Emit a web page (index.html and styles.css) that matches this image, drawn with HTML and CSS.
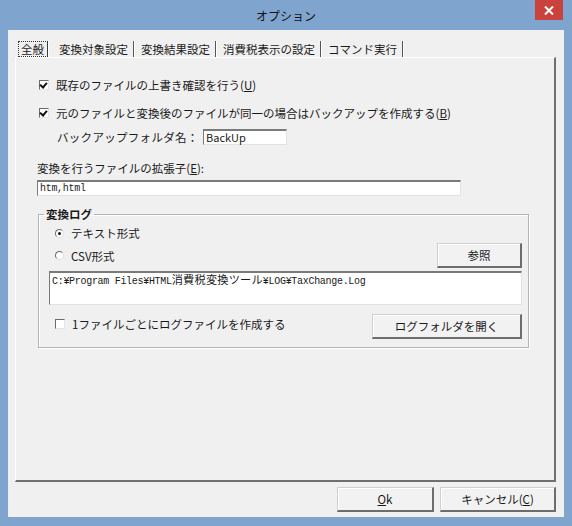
FILE: index.html
```html
<!DOCTYPE html>
<html lang="ja">
<head>
  <meta charset="UTF-8" />
  <title>オプション</title>
  <link rel="stylesheet" href="styles.css">
</head>
<body>
  <div class="window">
    <div class="titlebar">
      <span></span>
      <span class="title">オプション</span>
      <span class="close">
        <svg width="10" height="9" viewBox="0 0 10 9"><path d="M1 0.5 L9 8.5 M9 0.5 L1 8.5" stroke="#fff" stroke-width="2"/></svg>
      </span>
    </div>

    <div class="client">
      <div class="tabs">
        <span class="tab active">全般</span>
        <span class="tab">変換対象設定</span>
        <span class="tab">変換結果設定</span>
        <span class="tab">消費税表示の設定</span>
        <span class="tab">コマンド実行</span>
      </div>

      <div class="panel">
        <label class="check row1"><span class="box on"></span>既存のファイルの上書き確認を行う(<u>U</u>)</label>
        <label class="check row2"><span class="box on"></span>元のファイルと変換後のファイルが同一の場合はバックアップを作成する(<u>B</u>)</label>

        <div class="backup">
          <span class="backup-label">バックアップフォルダ名：</span>
          <div class="field backup-field">BackUp</div>
        </div>

        <div class="ext-label">変換を行うファイルの拡張子(<u>E</u>):</div>
        <div class="field ext-field mono">htm,html</div>

        <fieldset class="group">
          <legend>変換ログ</legend>
          <label class="radio radio1"><span class="dot on"></span>テキスト形式</label>
          <div class="group-row row-b">
            <label class="radio"><span class="dot"></span>CSV形式</label>
            <button class="btn btn-ref">参照</button>
          </div>
          <div class="field log-path mono">C:¥Program Files¥HTML<span class="cjk">消費税変換ツール</span>¥LOG¥TaxChange.Log</div>
          <div class="group-row row-c">
            <label class="check"><span class="box"></span>1ファイルごとにログファイルを作成する</label>
            <button class="btn btn-open">ログフォルダを開く</button>
          </div>
        </fieldset>
      </div>

      <div class="footer">
        <button class="btn btn-ok"><u>O</u>k</button>
        <button class="btn btn-cancel">キャンセル(<u>C</u>)</button>
      </div>
    </div>
  </div>
</body>
</html>
```

FILE: styles.css
```css
body {
  margin: 0;
  font-family: "Noto Sans CJK JP", "Noto Sans", sans-serif;
  font-size: 11.5px;
  color: #1a1a1a;
}
u {
  text-decoration: underline;
}
.window {
  width: 572px;
  height: 526px;
  background: #7fa5cf;
  padding: 0 8px 9px 8px;
  box-sizing: border-box;
  display: flex;
  flex-direction: column;
}
.titlebar {
  height: 30px;
  display: grid;
  grid-template-columns: 1fr auto 1fr;
  align-items: start;
}
.title {
  font-size: 12px;
  line-height: 32px;
  color: #111;
}
.close {
  justify-self: end;
  width: 28px;
  height: 20px;
  margin-right: 1px;
  background: #c9433c;
  display: flex;
  align-items: center;
  justify-content: center;
}
.client {
  flex: 1;
  background: #f0f0f0;
  border-left: 1px solid #e8eef6;
  display: flex;
  flex-direction: column;
}
.tabs {
  display: flex;
  align-items: center;
  height: 16px;
  margin: 11px 0 0 9px;
}
.tab {
  line-height: 16px;
  padding: 0 5px 0 6px;
  border-right: 1px solid #555;
  box-shadow: 1px 0 0 #fff;
  margin-right: 1px;
}
.tab.active {
  padding: 0 3px;
  margin-right: 5px;
  outline: 1px dotted #333;
  outline-offset: -1px;
  border-right: 1px solid #444;
}
.panel {
  margin: 0 8px 0 6px;
  height: 425px;
  box-sizing: border-box;
  border-top: 1px solid #fff;
  border-left: 1px solid #fff;
  border-right: 2px solid #707070;
  border-bottom: 2px solid #707070;
  padding: 19px 0 0 21px;
  display: flex;
  flex-direction: column;
  align-items: flex-start;
}
.check, .radio {
  display: flex;
  align-items: center;
  height: 16px;
  white-space: nowrap;
}
.row1 {
  margin-left: 2px;
}
.row2 {
  margin: 12px 0 0 2px;
}
.box {
  width: 8px;
  height: 8px;
  border-top: 1px solid #6b6b6b;
  border-left: 1px solid #6b6b6b;
  border-right: 1px solid #e4e4e4;
  border-bottom: 1px solid #e4e4e4;
  background: #fff;
  margin-right: 7px;
  position: relative;
}
.box.on::after {
  content: "";
  position: absolute;
  left: 1px;
  top: 0;
  width: 3px;
  height: 5px;
  border-right: 2px solid #111;
  border-bottom: 2px solid #111;
  transform: rotate(40deg);
}
.dot {
  width: 7px;
  height: 7px;
  border-radius: 50%;
  border: 1px solid #8a8a8a;
  border-color: #6b6b6b #e0e0e0 #e0e0e0 #6b6b6b;
  background: #fff;
  margin-right: 7px;
  position: relative;
}
.dot.on::after {
  content: "";
  position: absolute;
  left: 2px;
  top: 2px;
  width: 3px;
  height: 3px;
  border-radius: 50%;
  background: #111;
}
.backup {
  display: flex;
  align-items: center;
  margin: 8px 0 0 20px;
}
.backup-label {
  width: 146px;
  letter-spacing: 0.3px;
}
.field {
  background: #fff;
  border-top: 2px solid #7a7a7a;
  border-left: 1px solid #7a7a7a;
  border-right: 1px solid #e2e2e2;
  border-bottom: 1px solid #e2e2e2;
  box-sizing: border-box;
  padding-left: 2px;
  line-height: 13px;
  white-space: nowrap;
}
.backup-field {
  width: 84px;
  height: 16px;
  font-size: 11px;
}
.mono {
  font-family: "Liberation Mono", "Noto Sans CJK JP", monospace;
  font-size: 10px;
  letter-spacing: -0.3px;
}
.cjk {
  font-family: "Noto Sans CJK JP", sans-serif;
  font-size: 11.2px;
  letter-spacing: 0.2px;
}
.ext-label {
  margin-top: 16px;
  line-height: 14px;
}
.ext-field {
  width: 424px;
  height: 16px;
  margin-top: 5px;
}
.group {
  margin: 11px 0 0 1px;
  width: 491px;
  box-sizing: border-box;
  border: 1px solid #b4b4b4;
  box-shadow: inset 1px 1px 0 #fff, 1px 1px 0 #fff;
  padding: 4px 6px 8px 10px;
  display: flex;
  flex-direction: column;
}
.group legend {
  font-weight: bold;
  line-height: 14px;
  padding: 0 2px;
  margin-left: -5px;
}
.radio1 {
  margin-left: 6px;
}
.group-row {
  display: flex;
  justify-content: space-between;
  align-items: center;
}
.row-b {
  margin-top: 2px;
}
.row-b .radio {
  margin-left: 6px;
}
.row-c {
  margin-top: 9px;
}
.row-c .check {
  margin-left: 6px;
  margin-top: -6px;
}
.log-path {
  margin-top: 3px;
  height: 34px;
  padding-top: 0;
}
.btn {
  font-family: inherit;
  font-size: 11.5px;
  color: #1a1a1a;
  background: #f2f2f2;
  border-top: 1px solid #d0d0d0;
  border-left: 1px solid #d0d0d0;
  border-right: 2px solid #6d6d6d;
  border-bottom: 2px solid #6d6d6d;
  box-shadow: inset 1px 1px 0 #fff;
  height: 25px;
  padding: 0;
}
.btn-ref {
  width: 85px;
}
.btn-open {
  width: 150px;
  height: 25px;
}
.footer {
  display: flex;
  justify-content: flex-end;
  gap: 6px;
  padding: 5px 8px 0 0;
}
.btn-ok {
  width: 97px;
}
.btn-cancel {
  width: 116px;
}
```
